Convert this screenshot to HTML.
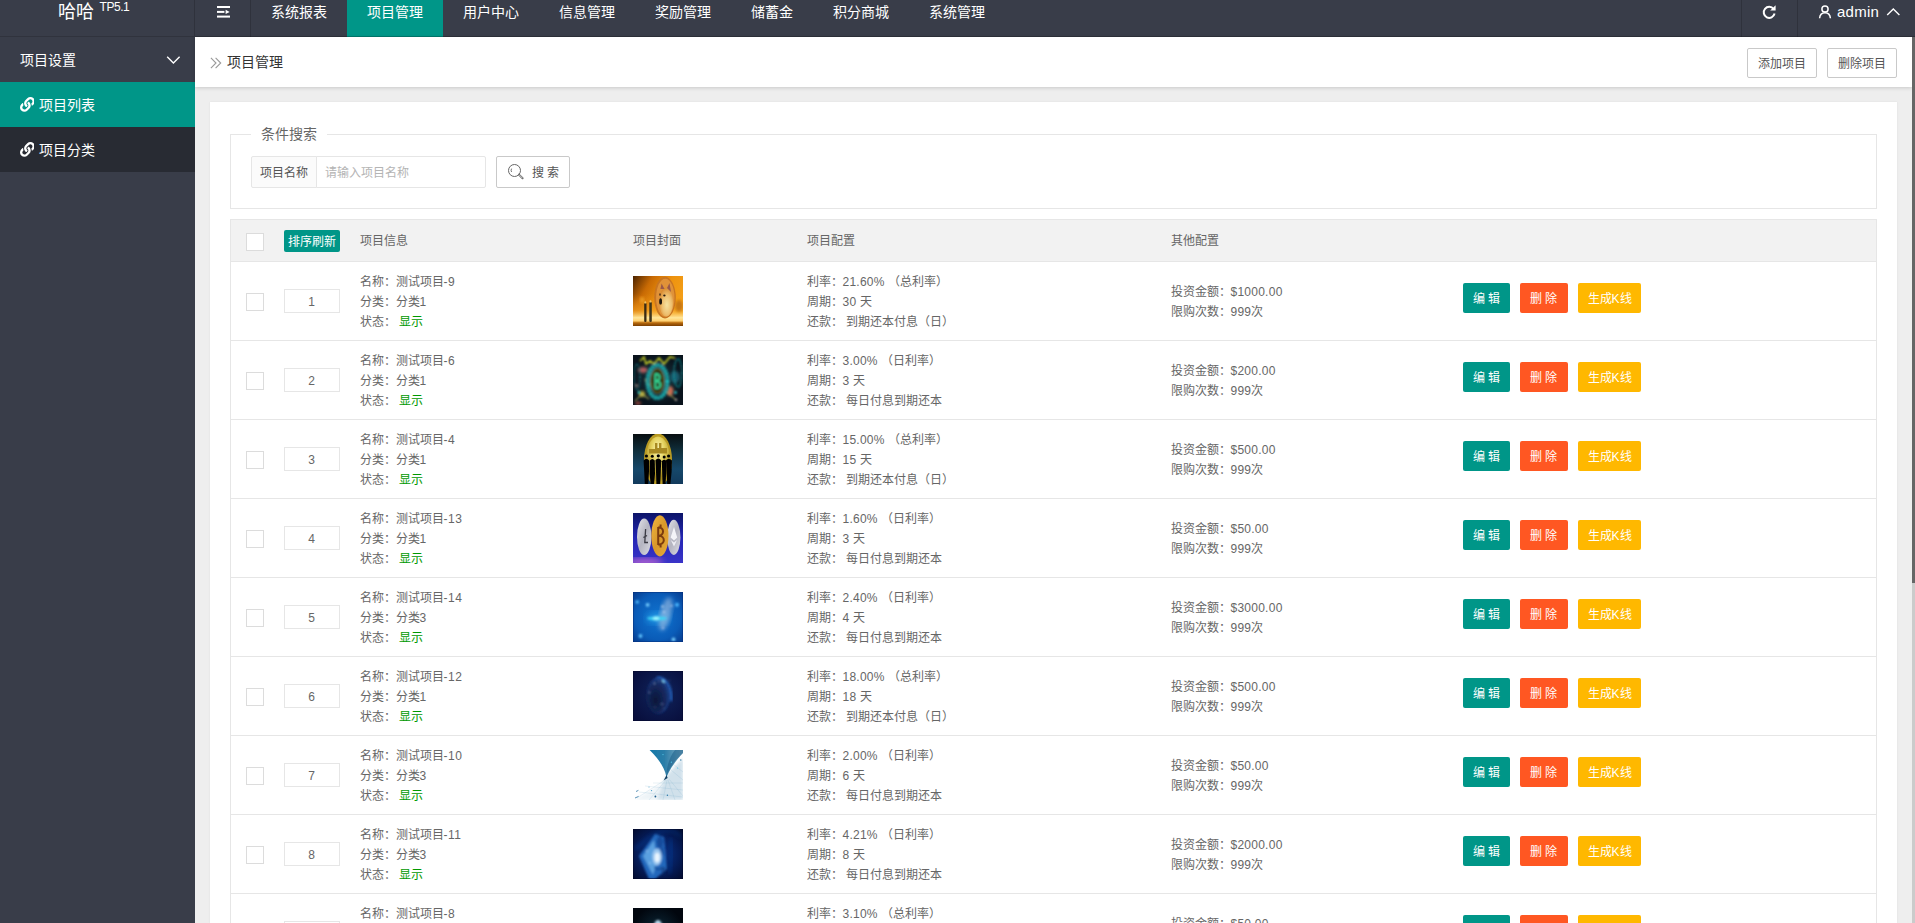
<!DOCTYPE html>
<html lang="zh-CN">
<head>
<meta charset="utf-8">
<title>项目管理</title>
<style>
*{box-sizing:border-box;margin:0;padding:0}
html,body{width:1915px;height:923px;overflow:hidden;background:#eee;font-family:"Liberation Sans",sans-serif;font-size:14px;color:#333;line-height:24px}
.abs{position:absolute}
/* header */
#hd{position:absolute;left:0;top:0;width:1915px;height:37px;background:#393D49;overflow:hidden}
#logo{position:absolute;left:0;top:0;width:195px;height:37px;border-right:1px solid #2f323c;border-bottom:1px solid #30333d;color:#fff}
#logo .t{position:absolute;left:58px;top:-1px;font-size:18px;line-height:26px;white-space:nowrap}
#logo sup{position:absolute;left:99.5px;top:-1px;font-size:12px;line-height:16px;white-space:nowrap;letter-spacing:-.45px}
.nav{position:absolute;top:0;height:37px;color:#fff;font-size:14px;line-height:24px;text-align:center;white-space:nowrap}
.nav.on{background:#009688}
.vsep{position:absolute;top:0;width:1px;height:37px;background:#2f323c}
/* side */
#side{position:absolute;left:0;top:37px;width:195px;height:886px;background:#393D49;color:#fff}
#side .it{position:absolute;left:0;width:195px;height:45px;line-height:47px;font-size:14px;white-space:nowrap}
/* topbar */
#tb{position:absolute;left:195px;top:37px;width:1717px;height:50px;background:#fff;box-shadow:0 1px 4px rgba(0,0,0,.16)}
.btnp{position:absolute;top:11px;height:30px;width:70px;border:1px solid #C9C9C9;border-radius:2px;background:#fff;color:#555;font-size:12px;line-height:30px;text-align:center;white-space:nowrap}
/* panel */
#pn{position:absolute;left:210px;top:102px;width:1687px;height:821px;overflow:hidden;background:#fff;box-shadow:0 0 2px rgba(0,0,0,.07)}
#fs{position:absolute;left:20px;top:32px;width:1647px;height:75px;border:1px solid #e6e6e6}
#lg{position:absolute;left:20px;top:-13px;padding:0 10px;background:#fff;font-size:14px;line-height:24px;color:#666;white-space:nowrap}
/* table */
#tbl{position:absolute;left:20px;top:117px;width:1647px;border-collapse:collapse;table-layout:fixed;font-size:12px;color:#666;line-height:20px;border:1px solid #e6e6e6}
#tbl th{background:#f2f2f2;font-weight:400;text-align:left;height:42px;padding:0 0 0 15px;white-space:nowrap}
#tbl td{height:79px;padding:0 0 0 15px;border-top:1px solid #e6e6e6;white-space:nowrap;vertical-align:middle}
#tbl td.tx{padding-top:2px}
#tbl tr.h th{border-bottom:1px solid #e6e6e6}
.cb{display:block;width:18px;height:18px;border:1px solid #dcdcdc;border-radius:0;background:#fff;position:relative;top:1px}
.srt{display:block;width:56px;height:24px;border:1px solid #e6e6e6;border-radius:0;text-align:center;line-height:25px;font-size:12px;color:#666;background:#fff}
.xs{display:block;width:56px;height:22px;background:#009688;color:#fff;border-radius:2px;font-size:12px;line-height:24px;text-align:center;overflow:hidden}
.g{color:#090}
.n{letter-spacing:.25px}.n2{letter-spacing:.5px}
.b{display:inline-block;height:30px;line-height:33px;overflow:hidden;padding:0 10px;border-radius:2px;color:#fff;font-size:12px;vertical-align:top;margin-right:10px;position:relative;top:-3px}
.b1{background:#009688;width:47px}.b2{background:#FF5722;width:48px}.b3{background:#FFB800;width:63px}
.th{display:block;width:50px;height:50px}
/* scrollbar */
#sbt{position:absolute;left:1912px;top:37px;width:3px;height:886px;background:#cbcbcb}
#sbh{position:absolute;left:1912px;top:37px;width:3px;height:546px;background:#666}
</style>
</head>
<body>
<div id="hd">
  <div id="logo"><span class="t">哈哈</span><sup>TP5.1</sup></div>
  <div class="vsep" style="left:250px"></div>
  <div class="nav" style="left:251px;width:96px">系统报表</div>
  <div class="nav on" style="left:347px;width:96px">项目管理</div>
  <div class="nav" style="left:443px;width:96px">用户中心</div>
  <div class="nav" style="left:539px;width:96px">信息管理</div>
  <div class="nav" style="left:635px;width:96px">奖励管理</div>
  <div class="nav" style="left:731px;width:82px">储蓄金</div>
  <div class="nav" style="left:813px;width:96px">积分商城</div>
  <div class="nav" style="left:909px;width:96px">系统管理</div>
  <div class="vsep" style="left:1741px"></div>
  <div class="vsep" style="left:1797px"></div>
  <div class="nav" style="left:1837px;font-size:15px;letter-spacing:.25px">admin</div>
  <svg class="abs" style="left:216px;top:5px" width="16" height="14" viewBox="0 0 16 14"><g fill="#fff"><rect x="1" y="1" width="13" height="2"/><rect x="1" y="5.9" width="7.4" height="2"/><path d="M9.6 4.7 L13.7 6.9 L9.6 9.1Z"/><rect x="1" y="10.6" width="13" height="2"/></g></svg>
  <svg class="abs" style="left:1761px;top:4px" width="16" height="16" viewBox="0 0 16 16"><path d="M12.6 5.0 A5.5 5.5 0 1 0 13.6 9.6" fill="none" stroke="#fff" stroke-width="2"/><path d="M9.2 6.6 L14.6 6.6 L14.6 1.2 Z" fill="#fff"/></svg>
  <svg class="abs" style="left:1818px;top:4px" width="14" height="16" viewBox="0 0 14 16"><circle cx="7" cy="5" r="3.1" fill="none" stroke="#fff" stroke-width="1.5"/><path d="M1.6 14.2 C1.9 10.6 4.2 8.7 7 8.7 C9.8 8.7 12.1 10.6 12.4 14.2" fill="none" stroke="#fff" stroke-width="1.5"/></svg>
  <svg class="abs" style="left:1886px;top:7px" width="15" height="10" viewBox="0 0 15 10"><path d="M1.2 8 L7.3 2 L13.4 8" fill="none" stroke="#fff" stroke-width="1.4"/></svg>

</div>
<div class="abs" style="left:195px;top:36px;width:1720px;height:1px;background:rgba(0,0,0,.2)"></div>
<div id="side">
  <div class="it" style="top:0;padding-left:20px">项目设置</div>
  <svg class="abs" style="left:166px;top:17.8px" width="15" height="10" viewBox="0 0 15 10"><path d="M1.2 1.7 L7.4 7.9 L13.6 1.7" fill="none" stroke="#fff" stroke-width="1.4"/></svg>
  <div class="it" style="top:45px;background:#009688;padding-left:39px">项目列表</div>
  <div class="it" style="top:90px;background:#282B33;padding-left:39px">项目分类</div>
<svg class="abs" style="left:19.7px;top:60.3px" width="14.8" height="14.8" viewBox="0 0 512 512"><path fill="#fff" d="M326.612 185.391c59.747 59.809 58.927 155.698.36 214.59-.11.12-.24.25-.36.37l-67.2 67.2c-59.27 59.27-155.699 59.262-214.96 0-59.27-59.26-59.27-155.7 0-214.96l37.106-37.106c9.84-9.84 26.786-3.3 27.294 10.606.648 17.722 3.826 35.527 9.69 52.721 1.986 5.822.567 12.262-3.783 16.612l-13.087 13.087c-28.026 28.026-28.905 73.66-1.155 101.96 28.024 28.579 74.086 28.749 102.325.51l67.2-67.19c28.191-28.191 28.073-73.757 0-101.83-3.701-3.694-7.429-6.564-10.341-8.569a16.037 16.037 0 0 1-6.947-12.606c-.396-10.567 3.348-21.456 11.698-29.806l21.054-21.055c5.521-5.521 14.182-6.199 20.584-1.731a152.482 152.482 0 0 1 20.522 17.197zM467.547 44.449c-59.261-59.262-155.69-59.27-214.96 0l-67.2 67.2c-.12.12-.25.25-.36.37-58.566 58.892-59.387 154.781.36 214.59a152.454 152.454 0 0 0 20.521 17.196c6.402 4.468 15.064 3.789 20.584-1.731l21.054-21.055c8.35-8.35 12.094-19.239 11.698-29.806a16.037 16.037 0 0 0-6.947-12.606c-2.912-2.005-6.64-4.875-10.341-8.569-28.073-28.073-28.191-73.639 0-101.83l67.2-67.19c28.239-28.239 74.3-28.069 102.325.51 27.75 28.3 26.872 73.934-1.155 101.96l-13.087 13.087c-4.35 4.35-5.769 10.79-3.783 16.612 5.864 17.194 9.042 34.999 9.69 52.721.509 13.906 17.454 20.446 27.294 10.606l37.106-37.106c59.271-59.259 59.271-155.699.001-214.959z"/></svg>
<svg class="abs" style="left:19.7px;top:105.3px" width="14.8" height="14.8" viewBox="0 0 512 512"><path fill="#fff" d="M326.612 185.391c59.747 59.809 58.927 155.698.36 214.59-.11.12-.24.25-.36.37l-67.2 67.2c-59.27 59.27-155.699 59.262-214.96 0-59.27-59.26-59.27-155.7 0-214.96l37.106-37.106c9.84-9.84 26.786-3.3 27.294 10.606.648 17.722 3.826 35.527 9.69 52.721 1.986 5.822.567 12.262-3.783 16.612l-13.087 13.087c-28.026 28.026-28.905 73.66-1.155 101.96 28.024 28.579 74.086 28.749 102.325.51l67.2-67.19c28.191-28.191 28.073-73.757 0-101.83-3.701-3.694-7.429-6.564-10.341-8.569a16.037 16.037 0 0 1-6.947-12.606c-.396-10.567 3.348-21.456 11.698-29.806l21.054-21.055c5.521-5.521 14.182-6.199 20.584-1.731a152.482 152.482 0 0 1 20.522 17.197zM467.547 44.449c-59.261-59.262-155.69-59.27-214.96 0l-67.2 67.2c-.12.12-.25.25-.36.37-58.566 58.892-59.387 154.781.36 214.59a152.454 152.454 0 0 0 20.521 17.196c6.402 4.468 15.064 3.789 20.584-1.731l21.054-21.055c8.35-8.35 12.094-19.239 11.698-29.806a16.037 16.037 0 0 0-6.947-12.606c-2.912-2.005-6.64-4.875-10.341-8.569-28.073-28.073-28.191-73.639 0-101.83l67.2-67.19c28.239-28.239 74.3-28.069 102.325.51 27.75 28.3 26.872 73.934-1.155 101.96l-13.087 13.087c-4.35 4.35-5.769 10.79-3.783 16.612 5.864 17.194 9.042 34.999 9.69 52.721.509 13.906 17.454 20.446 27.294 10.606l37.106-37.106c59.271-59.259 59.271-155.699.001-214.959z"/></svg>
</div>
<div id="tb">
  <svg class="abs" style="left:15px;top:19.5px" width="12" height="12" viewBox="0 0 12 12"><path d="M0.9 0.9 L6 6 L0.9 11.1 M5.6 0.9 L10.7 6 L5.6 11.1" fill="none" stroke="#999" stroke-width="1.1"/></svg>
  <div class="abs" style="left:32px;top:13px;font-size:14px;line-height:24px;color:#333;white-space:nowrap">项目管理</div>
  <div class="btnp" style="left:1552px">添加项目</div>
  <div class="btnp" style="left:1632px">删除项目</div>
</div>
<div id="pn">
  <div id="fs"><div id="lg">条件搜索</div>
    <div class="abs" style="left:20px;top:21px;width:66px;height:32px;border:1px solid #e6e6e6;border-radius:2px 0 0 2px;background:#FBFBFB;font-size:12px;line-height:33px;color:#555;text-align:center;white-space:nowrap">项目名称</div>
    <div class="abs" style="left:85px;top:21px;width:170px;height:32px;border:1px solid #e6e6e6;border-radius:0 2px 2px 0;background:#fff;font-size:12px;line-height:33px;color:#b4b4b4;padding-left:7.5px;white-space:nowrap">请输入项目名称</div>
    <div class="abs" style="left:265px;top:21px;width:74px;height:32px;border:1px solid #C9C9C9;border-radius:2px;background:#fff;font-size:12px;line-height:33px;color:#555;white-space:nowrap;padding-left:35px">搜 索</div>
    <svg class="abs" style="left:276px;top:28px" width="18" height="18" viewBox="0 0 18 18"><circle cx="7.5" cy="7.5" r="6" fill="none" stroke="#666" stroke-width="1"/><path d="M4.6 5.6 A3.2 3.2 0 0 0 4.6 9.0" fill="none" stroke="#666" stroke-width="0.9"/><path d="M11.9 11.6 L15.6 15.3" fill="none" stroke="#666" stroke-width="2" stroke-linecap="round"/><path d="M12.4 12.1 L15.2 14.9" fill="none" stroke="#fff" stroke-width="0.7" stroke-linecap="round"/></svg>
  </div>
  <table id="tbl">
    <colgroup><col style="width:38px"><col style="width:76px"><col style="width:273px"><col style="width:174px"><col style="width:364px"><col style="width:292px"><col></colgroup>
    <tr class="h"><th><span class="cb"></span></th><th><span class="xs">排序刷新</span></th><th>项目信息</th><th>项目封面</th><th>项目配置</th><th>其他配置</th><th></th></tr>
    <tr><td><span class="cb"></span></td><td><span class="srt">1</span></td>
<td class="tx">名称：测试项目<span class="n2">-9</span><br>分类：分类1<br>状态：<span class="g">&nbsp;显示</span></td>
<td><svg class="th" viewBox="0 0 50 50"><defs><linearGradient id="a1" x1="0" y1="0" x2="1" y2="0.6"><stop offset="0" stop-color="#4a2200"/><stop offset=".3" stop-color="#c86a04"/><stop offset=".6" stop-color="#ee930f"/><stop offset="1" stop-color="#f5a21a"/></linearGradient><linearGradient id="a2" x1="0" y1="0" x2="0" y2="1"><stop offset="0" stop-color="#f09410" stop-opacity="0"/><stop offset=".5" stop-color="#f8a828" stop-opacity=".5"/><stop offset=".74" stop-color="#ffe69a"/><stop offset=".84" stop-color="#ffd070"/><stop offset=".9" stop-color="#b86a0c"/><stop offset="1" stop-color="#7a3e02"/></linearGradient><radialGradient id="a3" cx=".55" cy=".6" r=".6"><stop offset="0" stop-color="#f6e2a0"/><stop offset=".55" stop-color="#eec070"/><stop offset="1" stop-color="#d98a30"/></radialGradient><filter id="ab"><feGaussianBlur stdDeviation=".7"/></filter><filter id="ab2"><feGaussianBlur stdDeviation="1.6"/></filter><clipPath id="ac"><rect width="50" height="50"/></clipPath></defs><g clip-path="url(#ac)"><rect width="50" height="50" fill="url(#a1)"/><rect y="18" width="50" height="32" fill="url(#a2)"/><ellipse cx="46" cy="30" rx="4" ry="6" fill="#a85a08" opacity=".6" filter="url(#ab2)"/><ellipse cx="9" cy="24" rx="2" ry="3" fill="#f8b030" opacity=".7" filter="url(#ab2)"/><g filter="url(#ab)"><ellipse cx="32" cy="21.6" rx="10.8" ry="20.8" fill="#c87420"/><ellipse cx="32.3" cy="21.8" rx="9.2" ry="19" fill="#e09238"/><ellipse cx="33.2" cy="26" rx="7" ry="14.4" fill="url(#a3)"/><path d="M27.4 13 L28.6 7.4 L31.5 13Z M34 12 L36.5 7 L38 16Z" fill="#9a5848"/><ellipse cx="27.6" cy="25.4" rx="1.4" ry="3.2" fill="#1a1208"/><ellipse cx="31.4" cy="19.6" rx="1.2" ry="1" fill="#2a1a10"/><ellipse cx="27" cy="18.6" rx=".6" ry="1.3" fill="#2a1a10"/><rect x="11.2" y="27" width="2.3" height="19" rx="1" fill="#3a2c14"/><rect x="16.3" y="26" width="2.5" height="20" rx="1" fill="#40341c"/><ellipse cx="12.3" cy="26.4" rx=".9" ry="1.2" fill="#f0c060"/><ellipse cx="17.5" cy="25.4" rx=".9" ry="1.2" fill="#f0c060"/></g></g></svg></td>
<td class="tx">利率：<span class="n">21.60%</span> （总利率）<br>周期：<span class="n">30</span> 天<br>还款：&nbsp;到期还本付息（日）</td>
<td class="tx">投资金额：<span class="n">$1000.00</span><br>限购次数：<span class="n">999</span>次</td>
<td><span class="b b1">编 辑</span><span class="b b2">删 除</span><span class="b b3">生成K线</span></td></tr>
<tr><td><span class="cb"></span></td><td><span class="srt">2</span></td>
<td class="tx">名称：测试项目<span class="n2">-6</span><br>分类：分类1<br>状态：<span class="g">&nbsp;显示</span></td>
<td><svg class="th" viewBox="0 0 50 50"><defs><filter id="bb"><feGaussianBlur stdDeviation=".8"/></filter><filter id="bb2"><feGaussianBlur stdDeviation="1.6"/></filter><clipPath id="bc"><rect width="50" height="50"/></clipPath><radialGradient id="b1"><stop offset="0" stop-color="#1c3a44"/><stop offset="1" stop-color="#09131c"/></radialGradient></defs><g clip-path="url(#bc)"><rect width="50" height="50" fill="url(#b1)"/><g filter="url(#bb2)"><ellipse cx="10" cy="15" rx="5" ry="3" fill="#d86a6a" opacity=".8"/><ellipse cx="37" cy="36" rx="3.5" ry="5" fill="#e8785a" opacity=".85"/><ellipse cx="9" cy="39" rx="3" ry="3" fill="#e0d040" opacity=".8"/><ellipse cx="5" cy="48" rx="3" ry="1.5" fill="#d05848" opacity=".8"/><ellipse cx="42" cy="22" rx="5" ry="6" fill="#1a6a80" opacity=".8"/></g><g filter="url(#bb)"><path d="M7 6 L11 2 L13 9 L17 6 L21 9 L26 3 L31 9 L37 2 L42 3" fill="none" stroke="#c4cc28" stroke-width="1.6"/><path d="M12 24 L15 31 L20 27 M2 46 L9 39 L16 44 M34 37 L43 45" fill="none" stroke="#c8c860" stroke-width="1"/><ellipse cx="24.5" cy="26.5" rx="9.8" ry="16.4" fill="none" stroke="#1fb0b0" stroke-width="4.4" stroke-dasharray="2.4 .7"/><ellipse cx="45" cy="18" rx="4" ry="14" fill="none" stroke="#179a9e" stroke-width="1.6" stroke-dasharray="1.5 1.2"/><ellipse cx="4" cy="22" rx="3" ry="13" fill="none" stroke="#148a90" stroke-width="1.2" stroke-dasharray="1.5 1.5"/><ellipse cx="24.3" cy="26" rx="6.6" ry="12.2" fill="#2c2410"/><ellipse cx="24.3" cy="26" rx="6.6" ry="12.2" fill="none" stroke="#8a8a28" stroke-width=".9"/><path d="M22.3 18.5 L22.3 33.5 M22.3 19 C28 18.5 28 25.5 22.6 26 C29 26 29 34 22.3 33.2" fill="none" stroke="#32dc96" stroke-width="1.9"/><circle cx="6" cy="37.5" r="1.3" fill="#2ae0e8"/><circle cx="42.5" cy="37.5" r="1.3" fill="#2ae0e8"/><circle cx="43" cy="44.8" r="1" fill="#f0e0d0"/><circle cx="3.5" cy="30.5" r=".9" fill="#f0d0c0"/></g></g></svg></td>
<td class="tx">利率：<span class="n">3.00%</span> （日利率）<br>周期：<span class="n">3</span> 天<br>还款：&nbsp;每日付息到期还本</td>
<td class="tx">投资金额：<span class="n">$200.00</span><br>限购次数：<span class="n">999</span>次</td>
<td><span class="b b1">编 辑</span><span class="b b2">删 除</span><span class="b b3">生成K线</span></td></tr>
<tr><td><span class="cb"></span></td><td><span class="srt">3</span></td>
<td class="tx">名称：测试项目<span class="n2">-4</span><br>分类：分类1<br>状态：<span class="g">&nbsp;显示</span></td>
<td><svg class="th" viewBox="0 0 50 50"><defs><filter id="cb"><feGaussianBlur stdDeviation=".6"/></filter><clipPath id="cc"><rect width="50" height="50"/></clipPath><linearGradient id="c1" x1="0" y1="0" x2="0" y2="1"><stop offset="0" stop-color="#080e10"/><stop offset=".35" stop-color="#10303e"/><stop offset=".7" stop-color="#16486a"/><stop offset="1" stop-color="#123a5c"/></linearGradient><radialGradient id="c2" cx=".5" cy=".3" r=".6"><stop offset="0" stop-color="#fbf7c0"/><stop offset=".45" stop-color="#e6d460"/><stop offset="1" stop-color="#a88c1c"/></radialGradient></defs><g clip-path="url(#cc)"><rect width="50" height="50" fill="url(#c1)"/><g filter="url(#cb)"><ellipse cx="25" cy="26" rx="14" ry="26.5" fill="#b89a24"/><ellipse cx="25" cy="25" rx="12" ry="22.5" fill="url(#c2)"/><path d="M22 9 H24.4 V14 H26 V9 H28.4 V14 H34 V19.5 H16 V15 H22Z" fill="#a88a20"/><g fill="#040404"><circle cx="13.4" cy="22" r="1.6"/><path d="M10.6 26.4 Q13.4 23 16.2 26.4 L16 38 L15.2 50 H11.8 L11.2 38Z"/><circle cx="19.3" cy="22.3" r="1.5"/><path d="M16.8 26.4 Q19.3 23.4 21.8 26.4 L22 40 L21 50 H17.6 L16.6 40Z"/><circle cx="25.3" cy="21.8" r="1.6"/><path d="M22.4 26.2 Q25.3 23 28.2 26.2 L27.8 38 L27.2 50 H23.4 L23 38Z"/><circle cx="31.2" cy="23" r="1.5"/><path d="M28.8 27.2 Q31.2 24.4 33.6 27.2 L33.2 40 L32.6 50 H29.6 L29.2 40Z"/><circle cx="35.6" cy="22" r="1.6"/><path d="M33 26.2 Q35.8 23 39 26.6 L38.6 38 L37.4 50 H34.2 L33.6 38Z"/></g></g></g></svg></td>
<td class="tx">利率：<span class="n">15.00%</span> （总利率）<br>周期：<span class="n">15</span> 天<br>还款：&nbsp;到期还本付息（日）</td>
<td class="tx">投资金额：<span class="n">$500.00</span><br>限购次数：<span class="n">999</span>次</td>
<td><span class="b b1">编 辑</span><span class="b b2">删 除</span><span class="b b3">生成K线</span></td></tr>
<tr><td><span class="cb"></span></td><td><span class="srt">4</span></td>
<td class="tx">名称：测试项目<span class="n2">-13</span><br>分类：分类1<br>状态：<span class="g">&nbsp;显示</span></td>
<td><svg class="th" viewBox="0 0 50 50"><defs><filter id="db"><feGaussianBlur stdDeviation=".55"/></filter><filter id="db2"><feGaussianBlur stdDeviation="3"/></filter><clipPath id="dc"><rect width="50" height="50"/></clipPath><linearGradient id="d1" x1="0" y1="0" x2="0" y2="1"><stop offset="0" stop-color="#0c1468"/><stop offset=".5" stop-color="#2426b4"/><stop offset="1" stop-color="#3a34c8"/></linearGradient><linearGradient id="d2" x1="0" y1="0" x2="1" y2="1"><stop offset="0" stop-color="#e4e4ea"/><stop offset=".5" stop-color="#b4b4c0"/><stop offset="1" stop-color="#dcdce4"/></linearGradient><linearGradient id="d3" x1="0" y1="0" x2="1" y2="1"><stop offset="0" stop-color="#f0b840"/><stop offset=".5" stop-color="#d8982a"/><stop offset="1" stop-color="#e8ac38"/></linearGradient></defs><g clip-path="url(#dc)"><rect width="50" height="50" fill="url(#d1)"/><ellipse cx="12" cy="49" rx="18" ry="4" fill="#b060d0" filter="url(#db2)"/><g filter="url(#db)"><ellipse cx="11.2" cy="23.8" rx="7.2" ry="18.2" fill="url(#d2)"/><ellipse cx="40.8" cy="24.4" rx="6.6" ry="17.6" fill="url(#d2)"/><ellipse cx="26.9" cy="22.8" rx="8.6" ry="20.6" fill="url(#d3)"/><path d="M12.6 16 L11.8 29.5 L15 29.5 M10.4 24.5 L14 22.5" fill="none" stroke="#3a3a44" stroke-width="1.3"/><path d="M41 14 L37.6 24.5 L41 27.5 L44.2 24.5Z" fill="#f4f4f8"/><path d="M37.8 27 L41 33.5 L44 27 L41 29.4Z" fill="#eeeef4"/><path d="M25.2 14 L25.2 32 M27.6 11.6 V14 M27.6 32 V34.4 M25.2 14.6 C31.6 14 31.6 22.4 25.6 22.8 C32.6 22.6 32.6 32 25.2 31.4" fill="none" stroke="#7c3c10" stroke-width="2"/></g></g></svg></td>
<td class="tx">利率：<span class="n">1.60%</span> （日利率）<br>周期：<span class="n">3</span> 天<br>还款：&nbsp;每日付息到期还本</td>
<td class="tx">投资金额：<span class="n">$50.00</span><br>限购次数：<span class="n">999</span>次</td>
<td><span class="b b1">编 辑</span><span class="b b2">删 除</span><span class="b b3">生成K线</span></td></tr>
<tr><td><span class="cb"></span></td><td><span class="srt">5</span></td>
<td class="tx">名称：测试项目<span class="n2">-14</span><br>分类：分类3<br>状态：<span class="g">&nbsp;显示</span></td>
<td><svg class="th" viewBox="0 0 50 50"><defs><filter id="eb"><feGaussianBlur stdDeviation="1.3"/></filter><filter id="eb2"><feGaussianBlur stdDeviation="2.2"/></filter><filter id="eb3"><feGaussianBlur stdDeviation="3.5"/></filter><clipPath id="ec"><rect width="50" height="50"/></clipPath><radialGradient id="e1" cx=".5" cy=".5" r=".75"><stop offset="0" stop-color="#1074d0"/><stop offset=".6" stop-color="#0a5cb8"/><stop offset="1" stop-color="#053484"/></radialGradient></defs><g clip-path="url(#ec)"><rect width="50" height="50" fill="url(#e1)"/><ellipse cx="25" cy="26" rx="12" ry="6" fill="#28a0e8" opacity=".7" filter="url(#eb3)"/><ellipse cx="32.5" cy="22" rx="5.5" ry="17" transform="rotate(14 32.5 22)" fill="#a8c4e4" opacity=".6" filter="url(#eb2)"/><g filter="url(#eb)"><ellipse cx="24" cy="26.3" rx="10" ry="1.9" fill="#3cd4f4"/><ellipse cx="23" cy="26.3" rx="3" ry="2.1" fill="#9af4ff"/><circle cx="4.2" cy="10" r="1.8" fill="#50b8f8"/><circle cx="14.6" cy="12.8" r="1.9" fill="#74ccff"/><circle cx="44" cy="12.8" r="2.1" fill="#48b0f8"/><circle cx="7.5" cy="44" r="1.9" fill="#60c4ff"/><circle cx="40.5" cy="47.4" r="1.9" fill="#78d0ff"/><circle cx="29.5" cy="14.5" r="1.1" fill="#d0e0f4"/><circle cx="38.5" cy="13.8" r="1" fill="#b8d0f0"/><circle cx="31" cy="20" r="1" fill="#c0d4f0"/><circle cx="30" cy="36" r="1" fill="#a8c4ec"/></g><rect x=".25" y=".25" width="49.5" height="49.5" fill="none" stroke="#04307c" stroke-width=".5"/></g></svg></td>
<td class="tx">利率：<span class="n">2.40%</span> （日利率）<br>周期：<span class="n">4</span> 天<br>还款：&nbsp;每日付息到期还本</td>
<td class="tx">投资金额：<span class="n">$3000.00</span><br>限购次数：<span class="n">999</span>次</td>
<td><span class="b b1">编 辑</span><span class="b b2">删 除</span><span class="b b3">生成K线</span></td></tr>
<tr><td><span class="cb"></span></td><td><span class="srt">6</span></td>
<td class="tx">名称：测试项目<span class="n2">-12</span><br>分类：分类1<br>状态：<span class="g">&nbsp;显示</span></td>
<td><svg class="th" viewBox="0 0 50 50"><defs><filter id="fb"><feGaussianBlur stdDeviation=".9"/></filter><filter id="fb2"><feGaussianBlur stdDeviation="1.6"/></filter><clipPath id="fc"><rect width="50" height="50"/></clipPath><radialGradient id="f1" cx=".55" cy=".45" r=".7"><stop offset="0" stop-color="#10245c"/><stop offset="1" stop-color="#080e3c"/></radialGradient><radialGradient id="f2" cx=".4" cy=".62" r=".7"><stop offset="0" stop-color="#0b1638"/><stop offset=".65" stop-color="#14285e"/><stop offset="1" stop-color="#1e3e84"/></radialGradient></defs><g clip-path="url(#fc)"><rect width="50" height="50" fill="url(#f1)"/><path d="M24 7 C33 6 38.5 17 38 30" fill="none" stroke="#2c74d8" stroke-width="2.4" filter="url(#fb2)"/><g filter="url(#fb)"><ellipse cx="25.4" cy="24.6" rx="11.4" ry="17.8" fill="#1c4a9c"/><ellipse cx="24.8" cy="25.2" rx="11" ry="17.4" fill="url(#f2)"/><ellipse cx="30.6" cy="10.2" rx="1.9" ry="1.1" transform="rotate(42 30.6 10.2)" fill="#84d8fc"/><circle cx="21.5" cy="12.5" r=".7" fill="#7c94cc"/><circle cx="16.2" cy="21.5" r=".7" fill="#6c84bc"/><circle cx="29" cy="33" r=".8" fill="#6c84bc"/><circle cx="31" cy="37.5" r=".6" fill="#5870a8"/><circle cx="36.5" cy="9.5" r=".5" fill="#5870a8"/><circle cx="22" cy="36" r=".6" fill="#5870a8"/><circle cx="26" cy="10" r=".6" fill="#6c84bc"/></g><rect x=".25" y=".25" width="49.5" height="49.5" fill="none" stroke="#05082c" stroke-width=".5"/></g></svg></td>
<td class="tx">利率：<span class="n">18.00%</span> （总利率）<br>周期：<span class="n">18</span> 天<br>还款：&nbsp;到期还本付息（日）</td>
<td class="tx">投资金额：<span class="n">$500.00</span><br>限购次数：<span class="n">999</span>次</td>
<td><span class="b b1">编 辑</span><span class="b b2">删 除</span><span class="b b3">生成K线</span></td></tr>
<tr><td><span class="cb"></span></td><td><span class="srt">7</span></td>
<td class="tx">名称：测试项目<span class="n2">-10</span><br>分类：分类3<br>状态：<span class="g">&nbsp;显示</span></td>
<td><svg class="th" viewBox="0 0 50 50"><defs><filter id="gb"><feGaussianBlur stdDeviation=".55"/></filter><filter id="gb2"><feGaussianBlur stdDeviation="1.8"/></filter><clipPath id="gc"><rect width="50" height="50"/></clipPath><linearGradient id="g1" x1="0" y1="0" x2="1" y2="0"><stop offset="0" stop-color="#1478a8"/><stop offset=".45" stop-color="#2c7ea8"/><stop offset="1" stop-color="#86aec4"/></linearGradient></defs><g clip-path="url(#gc)"><rect width="50" height="50" fill="#fff"/><g filter="url(#gb2)" opacity=".5"><path d="M33 26 L50 8 L50 50 L22 50 Z" fill="#a4c4d8"/><path d="M30 33 L2 50 L24 50Z" fill="#dce8f0"/></g><g filter="url(#gb)"><path d="M16.6 0 L50 0 L50 3 C45 8 38 17 34 26 L33.2 26 C32 19 26 9 16.6 0Z" fill="url(#g1)"/><path d="M33.6 26 C35 21 39 15 43 10 L50 3 V0 H42 C37 6 33.4 16 33.6 26Z" fill="#1c5e88" opacity=".55"/><path d="M33.6 25 L30.6 30.6 L34.6 28Z" fill="#0e3c60"/><g stroke="#5a9cc0" stroke-width=".45" opacity=".32" fill="none"><path d="M32 30 L4 48 M33 30 L16 50 M34 30 L30 50 M35 30 L42 50 M36 29 L50 46 M12 36 L50 40 M6 42 L50 47 M20 33 L50 33 M40 14 L50 22 M38 20 L50 30"/></g><circle cx="22.4" cy="46.5" r=".9" fill="#1a5a88"/><circle cx="34.4" cy="45.2" r=".7" fill="#2a78a8"/><circle cx="18.5" cy="40.6" r=".7" fill="#4aa0c8"/><circle cx="16" cy="37" r=".5" fill="#4aa0c8"/><path d="M2 48 L5.6 46.4 M3 41.5 L5.4 40.4" stroke="#4a88b0" stroke-width=".9"/><circle cx="47.8" cy="10" r=".8" fill="#4a88b0"/><circle cx="30" cy="4.6" r=".6" fill="#58c8e8"/><circle cx="38.4" cy="12.2" r=".6" fill="#58c8e8"/><circle cx="44.5" cy="18" r=".6" fill="#58c8e8"/></g></g></svg></td>
<td class="tx">利率：<span class="n">2.00%</span> （日利率）<br>周期：<span class="n">6</span> 天<br>还款：&nbsp;每日付息到期还本</td>
<td class="tx">投资金额：<span class="n">$50.00</span><br>限购次数：<span class="n">999</span>次</td>
<td><span class="b b1">编 辑</span><span class="b b2">删 除</span><span class="b b3">生成K线</span></td></tr>
<tr><td><span class="cb"></span></td><td><span class="srt">8</span></td>
<td class="tx">名称：测试项目<span class="n2">-11</span><br>分类：分类3<br>状态：<span class="g">&nbsp;显示</span></td>
<td><svg class="th" viewBox="0 0 50 50"><defs><filter id="hb"><feGaussianBlur stdDeviation=".9"/></filter><filter id="hb2"><feGaussianBlur stdDeviation="2.2"/></filter><clipPath id="hc"><rect width="50" height="50"/></clipPath><radialGradient id="h1" cx=".5" cy=".5" r=".75"><stop offset="0" stop-color="#0a3690"/><stop offset=".55" stop-color="#051c58"/><stop offset="1" stop-color="#020826"/></radialGradient></defs><g clip-path="url(#hc)"><rect width="50" height="50" fill="url(#h1)"/><path d="M2 20 C10 14 20 4 30 2 C40 0 46 4 48 8" fill="none" stroke="#1048a8" stroke-width="1.6" opacity=".7" filter="url(#hb2)"/><path d="M38 10 C40 22 38 36 36 44" fill="none" stroke="#0c3c94" stroke-width="2" opacity=".8" filter="url(#hb2)"/><g filter="url(#hb)"><path d="M6 27 L22 5 L31 8 L34 40 L22 50 L16 50Z" fill="#2468bc"/><path d="M10 27 L21 11 L24 32 L20 46Z" fill="#5aa0e0"/><ellipse cx="27" cy="13" rx="3.4" ry="6" fill="#184c9c"/><ellipse cx="29" cy="22" rx="2" ry="5" fill="#1c54a4"/><ellipse cx="24" cy="28" rx="4.8" ry="8.4" fill="#9cc8f0"/><ellipse cx="24.2" cy="28.5" rx="2.6" ry="4.8" fill="#eaf6ff"/><path d="M21 38 C24 41 27 41 30 38" fill="none" stroke="#0a2868" stroke-width=".9"/><path d="M29.4 38 V46 M31.6 38 V46" stroke="#0a2464" stroke-width="1"/><circle cx="14" cy="22" r="1" fill="#8cc0f0"/><circle cx="17" cy="34" r="1" fill="#8cc0f0"/></g><rect x=".25" y=".25" width="49.5" height="49.5" fill="none" stroke="#02082a" stroke-width=".5"/></g></svg></td>
<td class="tx">利率：<span class="n">4.21%</span> （日利率）<br>周期：<span class="n">8</span> 天<br>还款：&nbsp;每日付息到期还本</td>
<td class="tx">投资金额：<span class="n">$2000.00</span><br>限购次数：<span class="n">999</span>次</td>
<td><span class="b b1">编 辑</span><span class="b b2">删 除</span><span class="b b3">生成K线</span></td></tr>
<tr><td><span class="cb"></span></td><td><span class="srt">9</span></td>
<td class="tx">名称：测试项目<span class="n2">-8</span><br>分类：分类3<br>状态：<span class="g">&nbsp;显示</span></td>
<td><svg class="th" viewBox="0 0 50 50"><defs><filter id="ib"><feGaussianBlur stdDeviation=".9"/></filter><clipPath id="ic"><rect width="50" height="50"/></clipPath><radialGradient id="i1" cx=".5" cy=".45" r=".5"><stop offset="0" stop-color="#0c2838"/><stop offset="1" stop-color="#01060e"/></radialGradient></defs><g clip-path="url(#ic)"><rect width="50" height="50" fill="url(#i1)"/><ellipse cx="25" cy="19" rx="4.2" ry="7" fill="#b8d8ec" filter="url(#ib)"/></g></svg></td>
<td class="tx">利率：<span class="n">3.10%</span> （总利率）<br>周期：<span class="n">31</span> 天<br>还款：&nbsp;到期还本付息（日）</td>
<td class="tx">投资金额：<span class="n">$50.00</span><br>限购次数：<span class="n">999</span>次</td>
<td><span class="b b1">编 辑</span><span class="b b2">删 除</span><span class="b b3">生成K线</span></td></tr>
  </table>
</div>
<div id="sbt"></div><div id="sbh"></div>
</body>
</html>
